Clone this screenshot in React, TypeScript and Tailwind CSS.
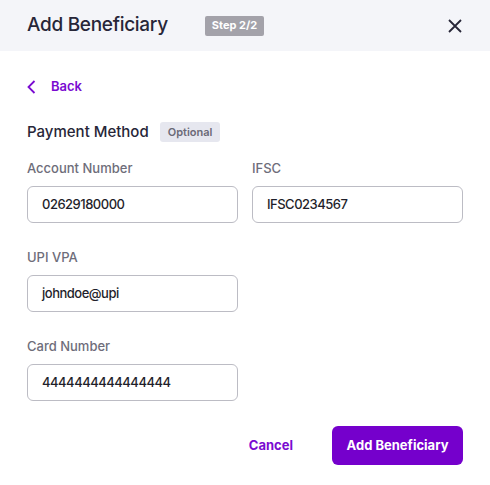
import React from "react";

function Field({ label, value }: { label: string; value: string }) {
  return (
    <div className="flex flex-col">
      <label className="text-[13px] leading-[16px] text-[#6e6d7a] font-medium">{label}</label>
      <div className="mt-[10px] h-[37px] w-[211px] rounded-[6px] border border-[#bcbcc4] flex items-center px-[14px] text-[13px] tracking-[-0.5px] text-[#1f1f2b] font-medium">
        {value}
      </div>
    </div>
  );
}

export default function App() {
  return (
    <div className="w-[490px] h-[485px] bg-white flex flex-col" style={{ fontFamily: "Inter, 'Open Sans', sans-serif" }}>
      <div className="h-[51px] shrink-0 bg-[#f4f5f9] flex items-center pl-[27px] pr-[28px]">
        <h1 className="text-[19px] font-medium text-[#272638] tracking-[-0.3px]">Add Beneficiary</h1>
        <span className="ml-[37px] h-[20px] px-[7px] rounded-[2px] bg-[#a3a2aa] text-white text-[11px] font-bold flex items-center">Step 2/2</span>
        <button className="ml-auto text-[#272638]">
          <svg width="14" height="14" viewBox="0 0 14 14" fill="none" stroke="currentColor" strokeWidth="1.8">
            <path d="M1 1L13 13M13 1L1 13" />
          </svg>
        </button>
      </div>
      <div className="px-[27px] flex flex-col">
        <div className="mt-[29px] h-[14px] flex items-center text-[#7a0bd1]">
          <svg width="9" height="14" viewBox="0 0 9 14" fill="none" stroke="currentColor" strokeWidth="1.8">
            <path d="M7.5 1L1.5 7L7.5 13" />
          </svg>
          <span className="ml-[15px] text-[13px] font-semibold">Back</span>
        </div>
        <div className="mt-[28px] h-[20px] flex items-center">
          <span className="text-[15px] font-medium text-[#272638]">Payment Method</span>
          <span className="ml-[11px] h-[20px] px-[8px] rounded-[3px] bg-[#e6e7ef] text-[11px] font-semibold text-[#6b6a77] flex items-center">Optional</span>
        </div>
        <div className="mt-[18px] flex gap-[14px]">
          <Field label="Account Number" value="02629180000" />
          <Field label="IFSC" value="IFSC0234567" />
        </div>
        <div className="mt-[26px]">
          <Field label="UPI VPA" value="johndoe@upi" />
        </div>
        <div className="mt-[26px]">
          <Field label="Card Number" value="4444444444444444" />
        </div>
        <div className="mt-[25px] flex items-center justify-end">
          <button className="text-[13px] font-bold text-[#7a0bd1]">Cancel</button>
          <button className="ml-[39px] h-[39px] w-[131px] rounded-[6px] bg-[#7500cc] text-white text-[13px] font-bold">Add Beneficiary</button>
        </div>
      </div>
    </div>
  );
}
